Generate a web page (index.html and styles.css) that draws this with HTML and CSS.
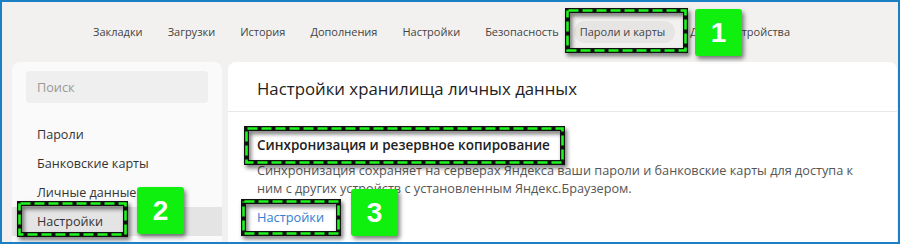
FILE: index.html
```html
<!DOCTYPE html>
<html lang="ru">
<head>
<meta charset="utf-8">
<title>Настройки</title>
<link rel="stylesheet" href="styles.css">
</head>
<body>
<div class="frame">
  <nav class="topnav">
    <span class="tab">Закладки</span>
    <span class="tab">Загрузки</span>
    <span class="tab">История</span>
    <span class="tab">Дополнения</span>
    <span class="tab">Настройки</span>
    <span class="tab">Безопасность</span>
    <span class="tab tab-active">Пароли и карты</span>
    <span class="tab">Другие устройства</span>
  </nav>
  <div class="body">
    <aside class="sidebar">
      <div class="search">Поиск</div>
      <ul class="menu">
        <li class="menu-item">Пароли</li>
        <li class="menu-item">Банковские карты</li>
        <li class="menu-item">Личные данные</li>
        <li class="menu-item menu-item-active">Настройки</li>
      </ul>
    </aside>
    <main class="content">
      <h1 class="title">Настройки хранилища личных данных</h1>
      <section class="section">
        <h2 class="section-title">Синхронизация и резервное копирование</h2>
        <p class="section-text">Синхронизация сохраняет на серверах Яндекса ваши пароли и банковские карты для доступа к ним с других устройств с установленным Яндекс.Браузером.</p>
        <a class="link">Настройки</a>
      </section>
    </main>
  </div>

  <svg class="marks" width="900" height="244" viewBox="0 0 900 244">
    <g class="dash">
      <rect x="567.5" y="10.5" width="118" height="40"/>
      <rect x="19.5" y="203.5" width="106" height="31"/>
      <rect x="246.5" y="128.5" width="316" height="34"/>
      <rect x="243.5" y="201.5" width="95" height="32"/>
    </g>
    <g class="dash-green">
      <rect x="567.5" y="10.5" width="118" height="40"/>
      <rect x="19.5" y="203.5" width="106" height="31"/>
      <rect x="246.5" y="128.5" width="316" height="34"/>
      <rect x="243.5" y="201.5" width="95" height="32"/>
    </g>
  </svg>
  <div class="badge badge-1">1</div>
  <div class="badge badge-2">2</div>
  <div class="badge badge-3">3</div>
</div>
</body>
</html>
```

FILE: styles.css
```css
* { box-sizing: border-box; }
html, body { margin: 0; padding: 0; }
body {
  font-family: "Open Sans", "Noto Sans", "DejaVu Sans", sans-serif;
  color: #222;
}
.frame {
  position: relative;
  width: 900px;
  height: 244px;
  overflow: hidden;
  background: #f2f1f0;
  border: 2px solid #1b7fc3;
  display: flex;
  flex-direction: column;
}
.topnav {
  height: 60px;
  display: flex;
  align-items: center;
  padding-left: 81px;
  gap: 5px;
  flex: none;
}
.tab {
  font-size: 11px;
  color: #444;
  padding: 0 10px;
  height: 22px;
  line-height: 22px;
  border-radius: 11px;
  white-space: nowrap;
}
.tab-active {
  background: #e6e5e4;
  padding: 0 10px 0 6px;
}
.body {
  flex: 1;
  display: flex;
  gap: 6px;
  padding: 0 1px 0 10px;
  min-height: 0;
}
.sidebar {
  width: 210px;
  flex: none;
  background: #fafafa;
  border-radius: 8px 8px 0 0;
  padding-top: 9px;
}
.search {
  margin: 0 14px;
  height: 32px;
  background: #efefef;
  border-radius: 4px;
  padding-left: 11px;
  line-height: 32px;
  font-size: 12.7px;
  color: #999;
}
.menu {
  list-style: none;
  margin: 17px 0 0;
  padding: 0;
}
.menu-item {
  height: 29px;
  line-height: 29px;
  padding-left: 25px;
  font-size: 12.6px;
  color: #333;
}
.menu-item-active {
  background: #e4e4e4;
}
.content {
  flex: 1;
  background: #fff;
  border-radius: 8px 8px 0 0;
}
.title {
  margin: 0;
  height: 50px;
  line-height: 50px;
  padding: 2px 0 0 29px;
  font-size: 16.8px;
  font-weight: 400;
  color: #222;
  border-bottom: 1px solid #e8e8e8;
}
.section {
  padding: 24px 30px 0 29px;
}
.section-title {
  margin: 0;
  font-size: 13.5px;
  font-weight: 600;
  line-height: 18px;
  color: #222;
}
.section-text {
  margin: 7px 0 0;
  font-size: 12.7px;
  line-height: 18px;
  color: #555;
  width: 610px;
}
.link {
  display: block;
  margin-top: 11px;
  font-size: 12.8px;
  line-height: 18px;
  color: #2e80d2;
}
.marks {
  position: absolute;
  left: -2px;
  top: -2px;
  filter: drop-shadow(2px 3px 2px rgba(0,0,0,0.55));
}
.dash rect {
  fill: none;
  stroke: #111;
  stroke-width: 5;
}
.dash-green rect {
  fill: none;
  stroke: #1df51d;
  stroke-width: 2.6;
  stroke-dasharray: 10 4;
  stroke-dashoffset: -1;
}
.badge {
  position: absolute;
  width: 47px;
  height: 47px;
  background: #0ff00e;
  border-radius: 3px;
  color: #fff;
  font-family: "Liberation Sans", Arial, sans-serif;
  font-weight: 700;
  font-size: 28px;
  line-height: 47px;
  text-align: center;
  box-shadow: 2px 3px 4px rgba(0,0,0,0.5);
}
.badge-1 { left: 693px; top: 7px; }
.badge-2 { left: 135px; top: 185px; }
.badge-3 { left: 349px; top: 187px; }
```
